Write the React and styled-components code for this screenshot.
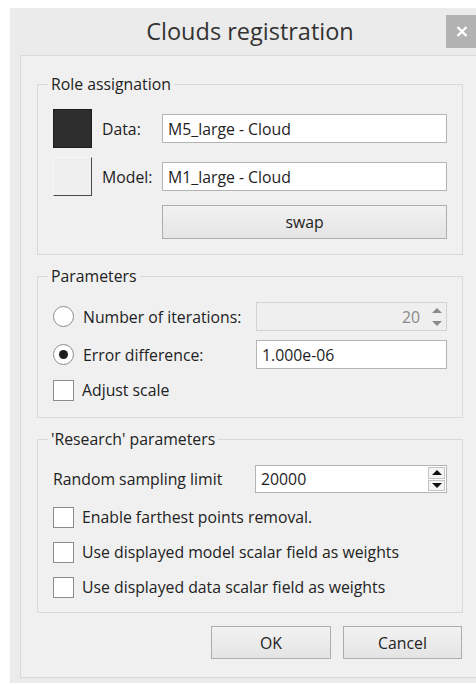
import React from 'react';
import styled, { createGlobalStyle } from 'styled-components';

const GlobalStyle = createGlobalStyle`
   html, body {
      margin: 0;
      padding: 0;
      background: #fff;
      overflow: hidden;
   }
   body {
      font-family: "Open Sans", "Noto Sans", "Liberation Sans", sans-serif;
      color: #1e1e1e;
   }
`;

const App = () => {
   return (
      <>
         <GlobalStyle />
         <Window>
            <TitleBar>
               <span />
               <Title>Clouds registration</Title>
               <CloseButton aria-label='close'>
                  <svg width='12' height='11' viewBox='0 0 12 11'>
                     <path d='M1.5 1 L10.5 10 M10.5 1 L1.5 10' stroke='#fff' strokeWidth='2.4' />
                  </svg>
               </CloseButton>
            </TitleBar>

            <Client>
               <Group>
                  <Legend>Role assignation</Legend>
                  <RoleGrid>
                     <Swatch $dark />
                     <Label>Data:</Label>
                     <TextInput defaultValue='M5_large - Cloud' />
                     <Swatch />
                     <Label>Model:</Label>
                     <TextInput defaultValue='M1_large - Cloud' />
                     <span />
                     <span />
                     <Button $height={34}>swap</Button>
                  </RoleGrid>
               </Group>

               <Group $gap>
                  <Legend>Parameters</Legend>
                  <ParamGrid>
                     <Radio />
                     <Label>Number of iterations:</Label>
                     <SpinBox $disabled>
                        <SpinValue $align='right' $disabled>20</SpinValue>
                        <SpinArrows $disabled />
                     </SpinBox>
                     <Radio $checked />
                     <Label>Error difference:</Label>
                     <TextInput defaultValue='1.000e-06' />
                  </ParamGrid>
                  <CheckRow $top={9}>
                     <CheckBox />
                     <Label>Adjust scale</Label>
                  </CheckRow>
               </Group>

               <Group $gap $bottom={13}>
                  <Legend>'Research' parameters</Legend>
                  <SamplingRow>
                     <Label>Random sampling limit</Label>
                     <SpinBox>
                        <SpinValue>20000</SpinValue>
                        <SpinArrows />
                     </SpinBox>
                  </SamplingRow>
                  <CheckRow $top={12}>
                     <CheckBox />
                     <Label>Enable farthest points removal.</Label>
                  </CheckRow>
                  <CheckRow $top={11}>
                     <CheckBox />
                     <Label>Use displayed model scalar field as weights</Label>
                  </CheckRow>
                  <CheckRow $top={11}>
                     <CheckBox />
                     <Label>Use displayed data scalar field as weights</Label>
                  </CheckRow>
               </Group>

               <ButtonRow>
                  <Button $width={120}>OK</Button>
                  <Button $width={119}>Cancel</Button>
               </ButtonRow>
            </Client>
         </Window>
      </>
   );
};

export default App;

const SpinArrows = ({ $disabled }) => (
   <ArrowColumn $disabled={$disabled}>
      <ArrowCell $disabled={$disabled}>
         <Triangle $up $disabled={$disabled} />
      </ArrowCell>
      <ArrowCell $disabled={$disabled}>
         <Triangle $disabled={$disabled} />
      </ArrowCell>
   </ArrowColumn>
);

const Window = styled.div`
   margin: 8px 0 0 10px;
   width: 480px;
   background: #ebebeb;
   padding-bottom: 5px;
   display: flex;
   flex-direction: column;
`;

const TitleBar = styled.div`
   height: 47px;
   display: grid;
   grid-template-columns: 44px 1fr 44px;
   align-items: center;
`;

const Title = styled.div`
   text-align: center;
   font-size: 23.5px;
   color: #333;
   margin-top: -1px;
`;

const CloseButton = styled.div`
   width: 32px;
   height: 33px;
   background: #b2b2b2;
   display: flex;
   align-items: center;
   justify-content: center;
`;

const Client = styled.div`
   margin: 0 10px;
   background: #f0f0f0;
   border: 1px solid #d8d8d8;
   border-right: none;
   padding: 18px 0 18px 16px;
`;

const Group = styled.fieldset`
   box-sizing: border-box;
   width: 426px;
   margin: ${(p) => (p.$gap ? '11px' : '0')} 0 0 0;
   border: 1px solid #d9d9d9;
   padding: ${(p) => (p.$gap ? '16px' : '15px')} 15px ${(p) => p.$bottom ?? 15}px 15px;
`;

const Legend = styled.legend`
   font-size: 15.8px;
   line-height: 20px;
   padding: 0 3px;
   margin-left: -5px;
   color: #222;
`;

const Label = styled.span`
   font-size: 15.8px;
   color: #222;
   white-space: nowrap;
`;

const RoleGrid = styled.div`
   display: grid;
   grid-template-columns: 49px 60px 1fr;
   grid-template-rows: 39px 39px 34px;
   row-gap: 9px;
   align-items: center;
`;

const Swatch = styled.div`
   width: 39px;
   height: 39px;
   box-sizing: border-box;
   background: ${(p) => (p.$dark ? '#2e2e2e' : '#efefef')};
   border: 1px solid;
   border-color: ${(p) =>
      p.$dark ? '#1c1c1c' : '#f7f7f7 #4a4a4a #4a4a4a #f7f7f7'};
`;

const TextInput = styled.input`
   box-sizing: border-box;
   height: 29px;
   width: 100%;
   border: 1px solid #b4b4b4;
   background: #fff;
   padding: 0 5px;
   font-family: inherit;
   font-size: 15.8px;
   color: #1e1e1e;
   outline: none;
`;

const Button = styled.div`
   box-sizing: border-box;
   width: ${(p) => (p.$width ? `${p.$width}px` : '100%')};
   height: ${(p) => p.$height ?? 33}px;
   display: flex;
   align-items: center;
   justify-content: center;
   border: 1px solid #adadad;
   background: linear-gradient(#f2f2f2, #e4e4e4);
   font-size: 15.8px;
   color: #222;
`;

const ParamGrid = styled.div`
   display: grid;
   grid-template-columns: 30px 173px 1fr;
   grid-template-rows: 29px 29px;
   row-gap: 9px;
   align-items: center;
`;

const Radio = styled.div`
   box-sizing: border-box;
   width: 21px;
   height: 21px;
   border-radius: 50%;
   border: 1px solid #8c8c8c;
   background: #fff;
   display: flex;
   align-items: center;
   justify-content: center;

   &::after {
      content: '';
      display: ${(p) => (p.$checked ? 'block' : 'none')};
      width: 9px;
      height: 9px;
      border-radius: 50%;
      background: #1e1e1e;
   }
`;

const CheckRow = styled.div`
   display: flex;
   align-items: center;
   gap: 8px;
   height: 24px;
   margin-top: ${(p) => p.$top}px;
`;

const CheckBox = styled.div`
   box-sizing: border-box;
   width: 21px;
   height: 21px;
   border: 1px solid #8c8c8c;
   background: #fff;
   flex-shrink: 0;
`;

const SamplingRow = styled.div`
   display: grid;
   grid-template-columns: 202px 1fr;
   align-items: center;
   height: 28px;
`;

const SpinBox = styled.div`
   box-sizing: border-box;
   height: ${(p) => (p.$disabled ? 29 : 28)}px;
   display: flex;
   align-items: stretch;
   border: 1px solid ${(p) => (p.$disabled ? '#d2d2d2' : '#b4b4b4')};
   background: ${(p) => (p.$disabled ? '#efefef' : '#fff')};
   padding: 1px;
`;

const SpinValue = styled.div`
   flex: 1;
   display: flex;
   align-items: center;
   justify-content: ${(p) => (p.$align === 'right' ? 'flex-end' : 'flex-start')};
   padding: 0 8px 0 4px;
   font-size: 15.8px;
   color: ${(p) => (p.$disabled ? '#8a8a8a' : '#1e1e1e')};
`;

const ArrowColumn = styled.div`
   width: 17px;
   display: flex;
   flex-direction: column;
   gap: 1px;
`;

const ArrowCell = styled.div`
   flex: 1;
   display: flex;
   align-items: center;
   justify-content: center;
   box-sizing: border-box;
   border: 1px solid ${(p) => (p.$disabled ? 'transparent' : '#c4c4c4')};
   background: ${(p) => (p.$disabled ? 'transparent' : '#f4f4f4')};
`;

const Triangle = styled.div`
   width: 0;
   height: 0;
   border-left: 5px solid transparent;
   border-right: 5px solid transparent;
   ${(p) => (p.$up ? 'border-bottom' : 'border-top')}: 5px solid
      ${(p) => (p.$disabled ? '#8a8a8a' : '#111')};
`;

const ButtonRow = styled.div`
   width: 425px;
   margin-top: 13px;
   display: flex;
   justify-content: flex-end;
   gap: 12px;
`;
